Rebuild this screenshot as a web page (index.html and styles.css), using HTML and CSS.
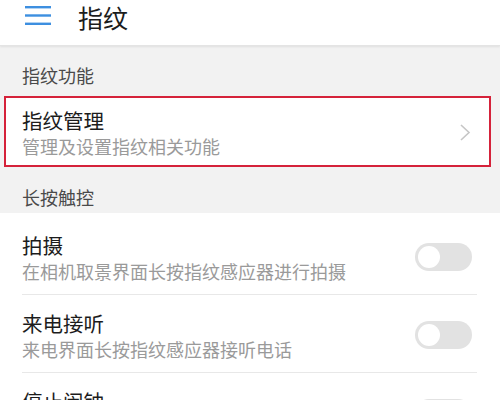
FILE: index.html
```html
<!DOCTYPE html>
<html lang="zh-CN">
<head>
<meta charset="utf-8">
<link rel="stylesheet" href="styles.css">
</head>
<body>
<header class="appbar">
  <svg class="menu" width="26" height="20" viewBox="0 0 26 20">
    <rect x="0" y="0" width="26" height="2.4" fill="#3d8fe0"/>
    <rect x="0" y="8.3" width="26" height="2.4" fill="#3d8fe0"/>
    <rect x="0" y="16.6" width="26" height="2.4" fill="#3d8fe0"/>
  </svg>
  <h1 class="title">指纹</h1>
</header>

<div class="section first">指纹功能</div>
<div class="manage">
  <div class="text">
    <div class="item-title">指纹管理</div>
    <div class="item-sub">管理及设置指纹相关功能</div>
  </div>
  <svg class="chev" width="12" height="17" viewBox="0 0 12 17">
    <polyline points="2,1 10,8.5 2,16" fill="none" stroke="#c6c6c6" stroke-width="1.6"/>
  </svg>
</div>

<div class="section second">长按触控</div>
<div class="list">
  <div class="row">
    <div class="text">
      <div class="item-title">拍摄</div>
      <div class="item-sub">在相机取景界面长按指纹感应器进行拍摄</div>
    </div>
    <div class="toggle"><span class="knob"></span></div>
  </div>
  <div class="row">
    <div class="text">
      <div class="item-title">来电接听</div>
      <div class="item-sub">来电界面长按指纹感应器接听电话</div>
    </div>
    <div class="toggle"><span class="knob"></span></div>
  </div>
  <div class="row">
    <div class="text">
      <div class="item-title">停止闹钟</div>
      <div class="item-sub">闹钟响铃时长按指纹感应器停止闹钟</div>
    </div>
    <div class="toggle"><span class="knob"></span></div>
  </div>
</div>
</body>
</html>
```
FILE: styles.css
```css
html, body {
  margin: 0;
  padding: 0;
}
body {
  background: #f2f2f2;
  font-family: "Noto Sans CJK SC", "Noto Sans", sans-serif;
  width: 500px;
  height: 400px;
  overflow: hidden;
}
.appbar {
  height: 46px;
  background: #ffffff;
  display: flex;
  align-items: flex-start;
  box-shadow: 0 1px 2px rgba(0,0,0,0.08);
  border-bottom: 1px solid #e4e4e4;
  box-sizing: border-box;
}
.menu {
  margin-left: 25px;
  margin-top: 6px;
  flex: none;
}
.title {
  margin: 2px 0 0 27px;
  font-size: 25px;
  line-height: 30px;
  font-weight: 400;
  color: #1c1c1c;
}
.section {
  box-sizing: border-box;
  padding-left: 22px;
  font-size: 18px;
  line-height: 18px;
  color: #4a4a4a;
}
.section.first {
  height: 50px;
  padding-top: 20px;
}
.section.second {
  height: 46px;
  padding-top: 21px;
}
.manage {
  margin: 0 9px 0 4px;
  height: 71px;
  box-sizing: border-box;
  border: 2px solid #d5223a;
  background: #ffffff;
  display: flex;
  align-items: center;
  padding: 0 16px;
}
.manage .text {
  flex: 1;
  padding-top: 1px;
}
.chev {
  flex: none;
  margin-right: 2px;
  margin-top: 2px;
}
.item-title {
  font-size: 20.5px;
  line-height: 20px;
  color: #1c1c1c;
}
.item-sub {
  font-size: 18px;
  line-height: 18px;
  color: #9a9a9a;
  margin-top: 7px;
}
.list {
  background: #ffffff;
  padding-top: 4px;
}
.row {
  margin: 0 23px 0 22px;
  padding: 17.5px 5px 14.5px 0;
  border-bottom: 1px solid #e8e8e8;
  display: flex;
  align-items: center;
}
.row .text {
  flex: 1;
}
.toggle {
  flex: none;
  width: 57px;
  height: 28px;
  border-radius: 14px;
  background: #e2e2e2;
  position: relative;
}
.knob {
  position: absolute;
  left: 3px;
  top: 3px;
  width: 22px;
  height: 22px;
  border-radius: 50%;
  background: #ffffff;
}
```
